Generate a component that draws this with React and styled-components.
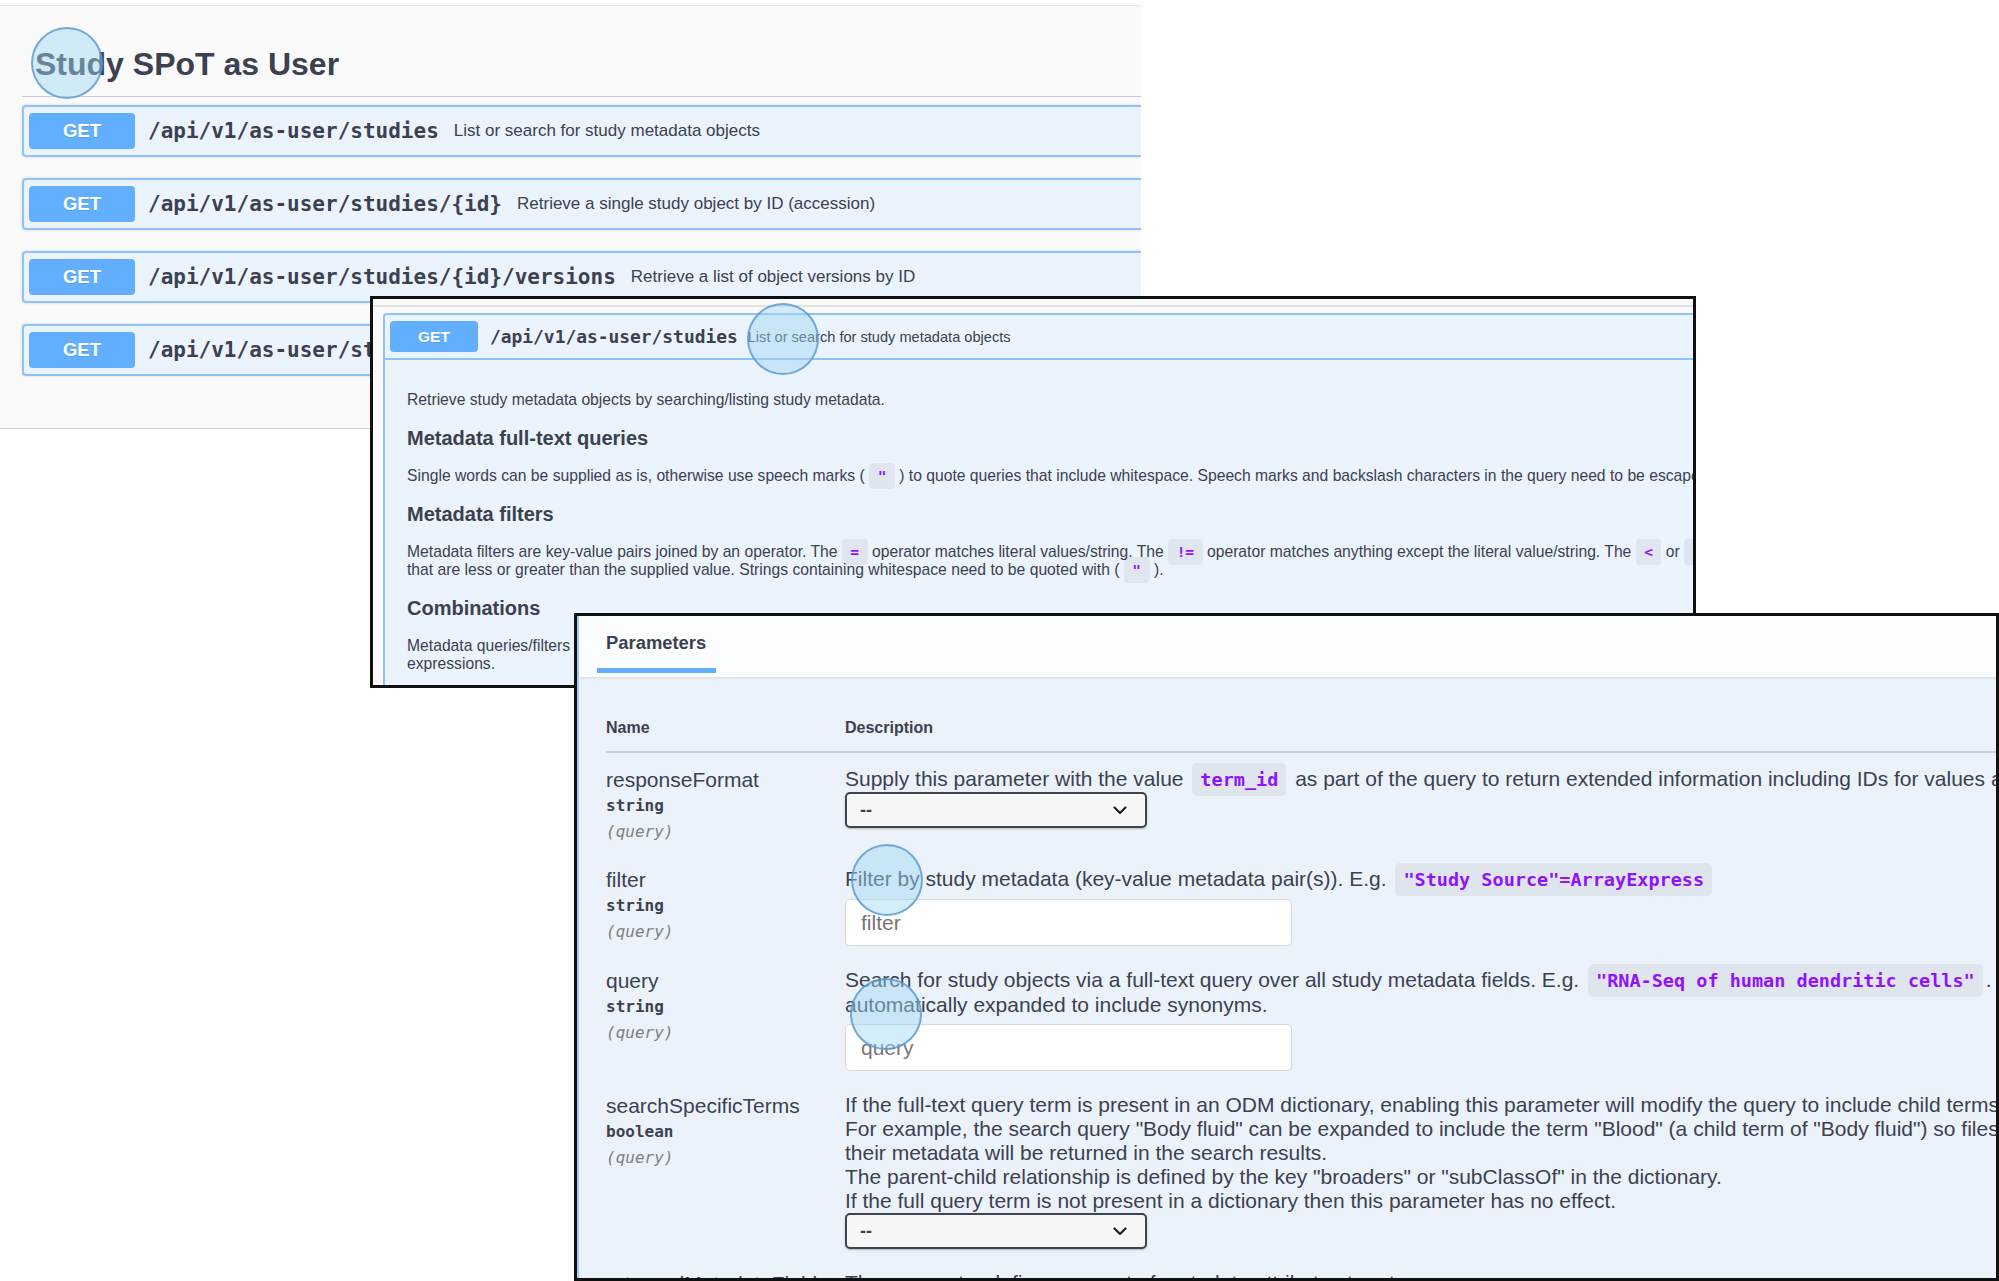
import React from 'react'
import styled, { createGlobalStyle } from 'styled-components'

const GlobalStyle = createGlobalStyle`
  html, body {
    margin: 0;
    padding: 0;
    background: #ffffff;
  }
  body {
    font-family: "Liberation Sans", Arial, sans-serif;
    color: #3b4151;
  }
`

const sans = `"Liberation Sans", Arial, Helvetica, sans-serif`
const mono = `"DejaVu Sans Mono", "Liberation Mono", monospace`

const endpoints = [
    { path: '/api/v1/as-user/studies', summary: 'List or search for study metadata objects' },
    { path: '/api/v1/as-user/studies/{id}', summary: 'Retrieve a single study object by ID (accession)' },
    { path: '/api/v1/as-user/studies/{id}/versions', summary: 'Retrieve a list of object versions by ID' },
    { path: '/api/v1/as-user/studies/{id}/versions/{version}', summary: 'Retrieve a study object by ID and version' },
]

const touches = [
    { x: 67, y: 63 },
    { x: 783, y: 339 },
    { x: 887, y: 880 },
    { x: 886, y: 1014 },
]

function Chevron() {
    return (
        <svg width="14" height="9" viewBox="0 0 14 9">
            <polyline points="1.5,1.5 7,7 12.5,1.5" fill="none" stroke="#222" strokeWidth="2.2" strokeLinecap="round" strokeLinejoin="round" />
        </svg>
    )
}

function App() {
    return (
        <>
            <GlobalStyle />
            <Canvas>
                {/* first window: the tag with its operations */}
                <TagListShot>
                    <TagHeader>Study SPoT as User</TagHeader>
                    <OpList>
                        {endpoints.map((e) => (
                            <OpBlock key={e.path}>
                                <Method>GET</Method>
                                <Path>{e.path}</Path>
                                <Summary>{e.summary}</Summary>
                            </OpBlock>
                        ))}
                    </OpList>
                </TagListShot>

                {/* second window: expanded operation */}
                <OperationShot>
                    <TagRule />
                    <OpenBlock>
                        <OpenSummary>
                            <Method $small>GET</Method>
                            <Path $small>/api/v1/as-user/studies</Path>
                            <Summary $small>List or search for study metadata objects</Summary>
                        </OpenSummary>
                        <DocBody>
                            <DocPara>Retrieve study metadata objects by searching/listing study metadata.</DocPara>
                            <DocHeading>Metadata full-text queries</DocHeading>
                            <DocPara>
                                Single words can be supplied as is, otherwise use speech marks ( <DocCode>"</DocCode> ) to quote queries that include whitespace. Speech marks and backslash characters in the query need to be escaped with a backslash.
                            </DocPara>
                            <DocHeading>Metadata filters</DocHeading>
                            <DocPara>
                                <DocLine>
                                    Metadata filters are key-value pairs joined by an operator. The <DocCode>=</DocCode> operator matches literal values/string. The <DocCode>!=</DocCode> operator matches anything except the literal value/string. The <DocCode>&lt;</DocCode> or <DocCode>&gt;</DocCode> operators match values
                                </DocLine>
                                <DocLine>
                                    that are less or greater than the supplied value. Strings containing whitespace need to be quoted with ( <DocCode>"</DocCode> ).
                                </DocLine>
                            </DocPara>
                            <DocHeading>Combinations</DocHeading>
                            <DocPara>
                                <DocLine>Metadata queries/filters can be combined with AND, OR and NOT and grouped with brackets to build more complex</DocLine>
                                <DocLine>expressions.</DocLine>
                            </DocPara>
                        </DocBody>
                    </OpenBlock>
                </OperationShot>

                {/* third window: parameters table */}
                <ParametersShot>
                    <ParamBlock>
                        <SectionHeader>
                            <TabLabel>Parameters</TabLabel>
                        </SectionHeader>
                        <ParamTable>
                            <TableHead>
                                <span>Name</span>
                                <span>Description</span>
                            </TableHead>

                            <ParamRow>
                                <NameCell>
                                    <ParamName>responseFormat</ParamName>
                                    <ParamType>string</ParamType>
                                    <ParamIn>(query)</ParamIn>
                                </NameCell>
                                <DescCell>
                                    <DescLine>
                                        Supply this parameter with the value <ParamCode>term_id</ParamCode> as part of the query to return extended information including IDs for values and attributes.
                                    </DescLine>
                                    <SelectBox>
                                        <span>--</span>
                                        <Chevron />
                                    </SelectBox>
                                </DescCell>
                            </ParamRow>

                            <ParamRow>
                                <NameCell>
                                    <ParamName>filter</ParamName>
                                    <ParamType>string</ParamType>
                                    <ParamIn>(query)</ParamIn>
                                </NameCell>
                                <DescCell>
                                    <DescLine>
                                        Filter by study metadata (key-value metadata pair(s)). E.g. <ParamCode>"Study Source"=ArrayExpress</ParamCode>
                                    </DescLine>
                                    <TextInput placeholder="filter" />
                                </DescCell>
                            </ParamRow>

                            <ParamRow>
                                <NameCell>
                                    <ParamName>query</ParamName>
                                    <ParamType>string</ParamType>
                                    <ParamIn>(query)</ParamIn>
                                </NameCell>
                                <DescCell>
                                    <DescLine>
                                        Search for study objects via a full-text query over all study metadata fields. E.g. <ParamCode>"RNA-Seq of human dendritic cells"</ParamCode>. Query terms are
                                    </DescLine>
                                    <DescLine>automatically expanded to include synonyms.</DescLine>
                                    <TextInput placeholder="query" />
                                </DescCell>
                            </ParamRow>

                            <ParamRow>
                                <NameCell>
                                    <ParamName>searchSpecificTerms</ParamName>
                                    <ParamType>boolean</ParamType>
                                    <ParamIn>(query)</ParamIn>
                                </NameCell>
                                <DescCell>
                                    <DescLine>If the full-text query term is present in an ODM dictionary, enabling this parameter will modify the query to include child terms of the original term.</DescLine>
                                    <DescLine>For example, the search query "Body fluid" can be expanded to include the term "Blood" (a child term of "Body fluid") so files containing "Blood" in</DescLine>
                                    <DescLine>their metadata will be returned in the search results.</DescLine>
                                    <DescLine>The parent-child relationship is defined by the key "broaders" or "subClassOf" in the dictionary.</DescLine>
                                    <DescLine>If the full query term is not present in a dictionary then this parameter has no effect.</DescLine>
                                    <SelectBox>
                                        <span>--</span>
                                        <Chevron />
                                    </SelectBox>
                                </DescCell>
                            </ParamRow>

                            <ParamRow>
                                <NameCell>
                                    <ParamName>returnedMetadataFields</ParamName>
                                    <ParamType>string</ParamType>
                                    <ParamIn>(query)</ParamIn>
                                </NameCell>
                                <DescCell>
                                    <DescLine>The parameter defines amount of metadata attributes to return:</DescLine>
                                </DescCell>
                            </ParamRow>
                        </ParamTable>
                    </ParamBlock>
                </ParametersShot>

                {touches.map((t, i) => (
                    <TouchMarker key={i} $x={t.x} $y={t.y} />
                ))}
            </Canvas>
        </>
    )
}

export default App

const Canvas = styled.div`
    position: relative;
    width: 1999px;
    height: 1281px;
    overflow: hidden;
    background: #ffffff;
`

/* ---------- window 1 ---------- */

const TagListShot = styled.section`
    position: absolute;
    left: 0;
    top: 5px;
    width: 1141px;
    height: 424px;
    box-sizing: border-box;
    overflow: hidden;
    background: #fafafa;
    border-top: 1px solid #e6e6e6;
    border-bottom: 1px solid #cfcfcf;
    padding-left: 22px;
    z-index: 1;
`

const TagHeader = styled.h3`
    margin: 0;
    padding: 38px 0 12px 13px;
    font-family: ${sans};
    font-size: 32px;
    line-height: 40px;
    font-weight: 700;
    color: #3b4151;
    border-bottom: 1px solid rgba(59, 65, 81, 0.25);
    white-space: nowrap;
`

const OpList = styled.div`
    display: flex;
    flex-direction: column;
    gap: 21px;
    margin-top: 8px;
`

const OpBlock = styled.div`
    display: flex;
    align-items: center;
    box-sizing: border-box;
    width: 1200px;
    height: 52px;
    padding: 0 5px;
    border: 2px solid #8ec3f9;
    border-radius: 4px;
    background: #ebf3fc;
    box-shadow: 0 0 3px rgba(0, 0, 0, 0.15);
`

const Method = styled.div`
    flex: none;
    display: flex;
    align-items: center;
    justify-content: center;
    width: ${(p) => (p.$small ? 88 : 106)}px;
    height: ${(p) => (p.$small ? 31 : 36)}px;
    border-radius: 4px;
    background: #61affe;
    color: #ffffff;
    font-family: ${sans};
    font-weight: 700;
    font-size: ${(p) => (p.$small ? 15.5 : 18.5)}px;
    text-shadow: 0 1px 0 rgba(0, 0, 0, 0.1);
`

const Path = styled.span`
    flex: none;
    margin-left: ${(p) => (p.$small ? 12 : 13)}px;
    font-family: ${mono};
    font-weight: 700;
    font-size: ${(p) => (p.$small ? 17.9 : 21)}px;
    color: #3b4151;
    white-space: nowrap;
`

const Summary = styled.span`
    margin-left: ${(p) => (p.$small ? 10 : 15)}px;
    font-family: ${sans};
    font-size: ${(p) => (p.$small ? 14.6 : 17)}px;
    color: #3b4151;
    white-space: nowrap;
`

/* ---------- window 2 ---------- */

const OperationShot = styled.section`
    position: absolute;
    left: 370px;
    top: 296px;
    width: 1326px;
    height: 392px;
    box-sizing: border-box;
    overflow: hidden;
    background: #fafafa;
    border: 3px solid #111111;
    z-index: 2;
`

const TagRule = styled.div`
    height: 6px;
    border-bottom: 2px solid #e2e2e2;
`

const OpenBlock = styled.div`
    margin: 6px -40px 0 10px;
    border: 2px solid #8ec3f9;
    border-radius: 4px 0 0 0;
    background: #ebf3fc;
    height: 400px;
`

const OpenSummary = styled.div`
    display: flex;
    align-items: center;
    padding: 6px 5px;
    border-bottom: 2px solid #8ec3f9;
`

const DocBody = styled.div`
    padding: 31px 22px 0;
    font-family: ${sans};
    color: #3b4151;
`

const DocPara = styled.div`
    margin: 0 0 17px;
    font-size: 15.7px;
    line-height: 18px;
    white-space: nowrap;
`

const DocLine = styled.div`
    white-space: nowrap;
`

const DocHeading = styled.h4`
    margin: 0 0 17px;
    font-size: 20px;
    line-height: 24px;
    font-weight: 700;
    color: #3b4151;
`

const DocCode = styled.code`
    padding: 5px 8.5px;
    border-radius: 4px;
    background: rgba(0, 0, 0, 0.05);
    font-family: ${mono};
    font-weight: 700;
    font-size: 14.5px;
    color: #9012fe;
`

/* ---------- window 3 ---------- */

const ParametersShot = styled.section`
    position: absolute;
    left: 574px;
    top: 613px;
    width: 1425px;
    height: 668px;
    box-sizing: border-box;
    overflow: hidden;
    background: #ffffff;
    border: 3px solid #111111;
    z-index: 3;
`

const ParamBlock = styled.div`
    height: 100%;
    border-left: 2px solid #a3cbf5;
    background: #ebf2fa;
`

const SectionHeader = styled.div`
    height: 61px;
    box-sizing: border-box;
    padding: 15px 0 0 27px;
    background: #fcfdfe;
    box-shadow: 0 1px 2px rgba(0, 0, 0, 0.1);
`

const TabLabel = styled.span`
    position: relative;
    display: inline-block;
    font-family: ${sans};
    font-size: 18.4px;
    line-height: 24px;
    font-weight: 700;
    color: #3b4151;

    &::after {
        content: '';
        position: absolute;
        left: -9px;
        right: -10px;
        bottom: -18px;
        height: 5px;
        background: #61affe;
    }
`

const ParamTable = styled.div`
    padding-left: 27px;
    font-family: ${sans};
    color: #3b4151;
`

const TableHead = styled.div`
    display: grid;
    grid-template-columns: 239px 1fr;
    padding: 41px 0 13px;
    border-bottom: 2px solid #c8ced6;
    font-size: 16px;
    line-height: 20px;
    font-weight: 700;
`

const ParamRow = styled.div`
    display: grid;
    grid-template-columns: 239px 1fr;
    padding: 14px 0 8px;
`

const NameCell = styled.div`
    display: flex;
    flex-direction: column;
`

const ParamName = styled.div`
    font-size: 21px;
    line-height: 26px;
    white-space: nowrap;
`

const ParamType = styled.div`
    font-family: ${mono};
    font-size: 16px;
    font-weight: 700;
    line-height: 26px;
`

const ParamIn = styled.div`
    font-family: ${mono};
    font-size: 16px;
    font-style: italic;
    line-height: 26px;
    color: #808080;
`

const DescCell = styled.div`
    display: flex;
    flex-direction: column;
    align-items: flex-start;
`

const DescLine = styled.div`
    font-size: 21px;
    line-height: 24px;
    white-space: nowrap;
`

const ParamCode = styled.code`
    margin: 0 3px;
    padding: 6px 8px;
    border-radius: 5px;
    background: rgba(0, 0, 0, 0.05);
    font-family: ${mono};
    font-weight: 700;
    font-size: 18.5px;
    color: #9012fe;
`

const SelectBox = styled.div`
    display: flex;
    align-items: center;
    justify-content: space-between;
    box-sizing: border-box;
    width: 302px;
    height: 36px;
    padding: 0 18px 0 13px;
    border: 2px solid #41444e;
    border-radius: 5px;
    background: #f7f7f7;
    box-shadow: 0 1px 2px rgba(0, 0, 0, 0.25);
    font-size: 18px;
    font-weight: 700;
    color: #3b4151;
`

const TextInput = styled.input`
    display: block;
    box-sizing: border-box;
    width: 447px;
    height: 47px;
    margin-top: 7px;
    padding: 0 15px;
    border: 1px solid #d9d9d9;
    border-radius: 5px;
    background: #ffffff;
    font-family: ${sans};
    font-size: 21px;
    color: #3b4151;
    outline: none;

    &::placeholder {
        color: #767676;
    }
`

/* ---------- touch markers ---------- */

const TouchMarker = styled.div`
    position: absolute;
    left: ${(p) => p.$x - 36}px;
    top: ${(p) => p.$y - 36}px;
    width: 68px;
    height: 68px;
    border-radius: 50%;
    border: 2px solid rgba(80, 145, 205, 0.75);
    background: rgba(160, 215, 245, 0.45);
    pointer-events: none;
    z-index: 10;
`
